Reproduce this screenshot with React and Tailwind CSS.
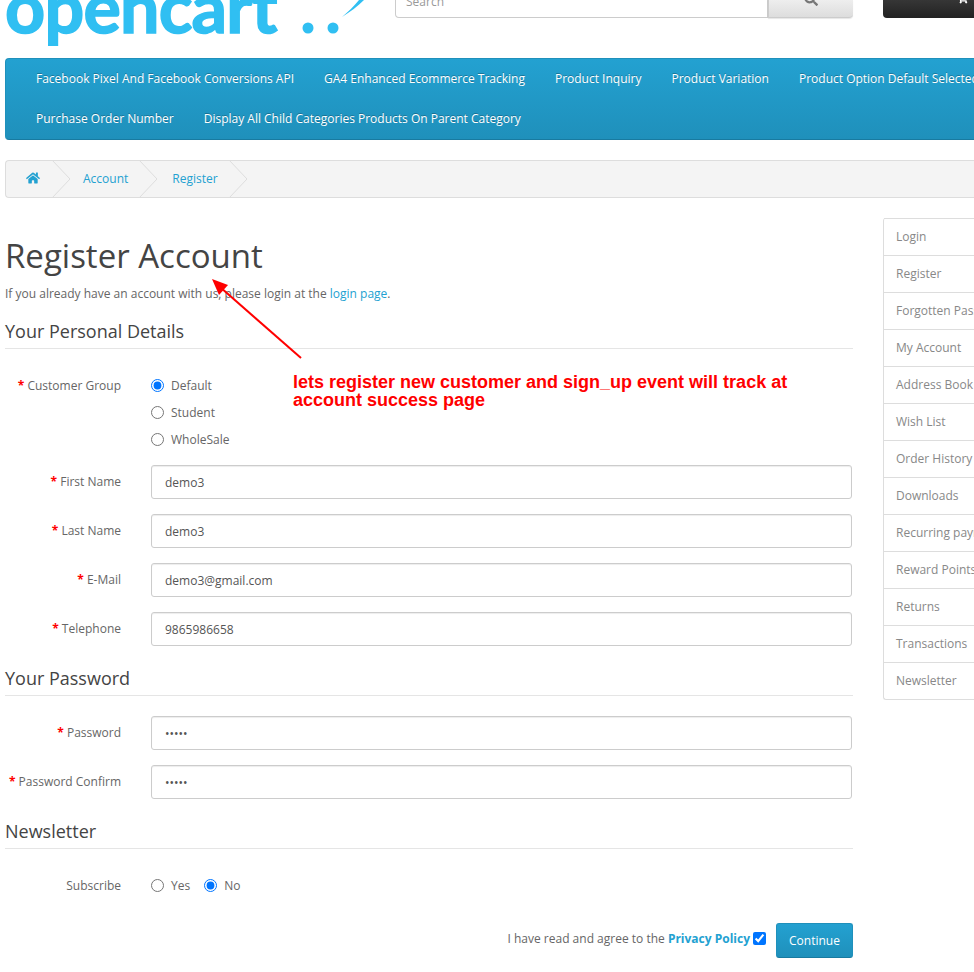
import { FaHome, FaSearch, FaShoppingCart } from 'react-icons/fa'

const menuTop = ['Facebook Pixel And Facebook Conversions API', 'GA4 Enhanced Ecommerce Tracking', 'Product Inquiry', 'Product Variation', 'Product Option Default Selected']
const menuBottom = ['Purchase Order Number', 'Display All Child Categories Products On Parent Category']
const sideLinks = ['Login', 'Register', 'Forgotten Password', 'My Account', 'Address Book', 'Wish List', 'Order History', 'Downloads', 'Recurring payments', 'Reward Points', 'Returns', 'Transactions', 'Newsletter']

function MenuRow({ items }) {
  return (
    <div className="flex h-10 items-center whitespace-nowrap pl-[15px]">
      {items.map((item) => (
        <a key={item} className="px-[15px] text-xs text-white [text-shadow:0_-1px_0_rgba(0,0,0,0.25)]">{item}</a>
      ))}
    </div>
  )
}

function Chevron() {
  return (
    <svg width="20" height="38" viewBox="0 0 20 38" className="shrink-0">
      <polyline points="0,0 18,19 0,38" fill="none" stroke="#dddddd" strokeWidth="1" />
    </svg>
  )
}

function Legend({ children, className }) {
  return <h2 className={`border-b border-[#e5e5e5] pb-1 text-lg leading-[25px] text-[#444] ${className}`}>{children}</h2>
}

function Field({ label, value, type = 'text', className = 'mt-[15px]' }) {
  return (
    <div className={`flex items-start ${className}`}>
      <label className="w-[116px] shrink-0 pt-[7px] text-right text-xs leading-[20px] text-[#666]">
        <span className="font-bold text-[#f00]">* </span>{label}
      </label>
      <input
        type={type}
        defaultValue={value}
        className="ml-[30px] h-[34px] w-[701px] rounded-[3px] border border-[#ccc] bg-white px-[13px] text-xs text-[#555] shadow-[inset_0_1px_1px_rgba(0,0,0,0.075)]"
      />
    </div>
  )
}

function Radio({ name, label, checked }) {
  return (
    <label className="flex h-[27px] items-center text-xs text-[#666]">
      <input type="radio" name={name} defaultChecked={checked} className="m-0 mr-[7px] size-[13px]" />
      {label}
    </label>
  )
}

export default function App() {
  return (
    <div className="relative h-[972px] w-[974px] overflow-hidden bg-white font-['Open_Sans',sans-serif] text-xs text-[#666]">
      {/* header, scrolled so its top is cut off */}
      <header className="relative flex h-[58px] items-end overflow-hidden pb-[40px]">
        <div className="absolute left-[5px] top-[-44px] font-['Lato',sans-serif] text-[70px] font-bold leading-[100px] tracking-[-0.8px] text-[#30bff2] [-webkit-text-stroke:1.5px_#30bff2]">opencart</div>
        <svg width="90" height="50" viewBox="0 0 90 50" className="absolute left-[290px] top-0">
          <circle cx="18" cy="28" r="5.5" fill="#30bff2" />
          <circle cx="43" cy="28" r="5.5" fill="#30bff2" />
          <path d="M52 17 C60 12 68 6 74 0 L69 0 C64 6 58 12 52 17 Z" fill="#30bff2" />
        </svg>
        <div className="ml-[395px] flex h-[18px] w-[458px] items-end">
          <div className="h-[18px] w-[373px] rounded-bl-[4px] border border-t-0 border-[#ccc] pl-[10px] text-xs leading-[3px] text-[#999]">Search</div>
          <div className="flex h-[18px] w-[85px] items-end justify-center rounded-br-[4px] border-b border-l border-[#ccc] bg-gradient-to-b from-[#eeeeee] to-[#dddddd] pb-[11px] shadow-[0_1px_1px_rgba(0,0,0,0.1)]">
            <FaSearch className="size-[14px] text-[#777]" />
          </div>
        </div>
        <div className="ml-[30px] flex h-[18px] w-[100px] shrink-0 items-end rounded-bl-[4px] bg-gradient-to-b from-[#363636] to-[#222222] pb-[14px] pl-[74px]">
          <FaShoppingCart className="size-[11px] shrink-0 text-white" />
        </div>
      </header>

      <nav className="ml-[5px] h-[82px] w-[1000px] rounded-l-[4px] border-y border-l border-[#1f90bb] border-b-[#187aa0] bg-gradient-to-b from-[#23a1d1] to-[#1f90bb]">
        <MenuRow items={menuTop} />
        <MenuRow items={menuBottom} />
      </nav>

      <ul className="ml-[5px] mt-5 flex h-[38px] w-[1000px] items-center rounded-l-[4px] border-y border-l border-[#ddd] bg-[#f4f4f4] text-xs text-[#23a1d1]">
        <li className="flex items-center pl-5"><FaHome className="mr-3 size-[14px] -translate-y-px" /><Chevron /></li>
        <li className="flex items-center pl-[11px]"><a className="mr-[11px]">Account</a><Chevron /></li>
        <li className="flex items-center pl-[13px]"><a className="mr-[11px]">Register</a><Chevron /></li>
      </ul>

      <div className="flex items-start pl-[5px] pt-5">
        <main className="w-[848px] shrink-0">
          <h1 className="mt-5 text-[33px] leading-[36px] text-[#444]">Register Account</h1>
          <p className="mt-[10px] leading-[20px]">If you already have an account with us, please login at the <a className="text-[#23a1d1]">login page</a>.</p>

          <Legend className="mt-[15px]">Your Personal Details</Legend>
          <div className="mt-[23px] flex items-start">
            <label className="w-[116px] shrink-0 pt-1 text-right leading-[20px]"><span className="font-bold text-[#f00]">* </span>Customer Group</label>
            <div className="ml-[30px]">
              <Radio name="group" label="Default" checked />
              <Radio name="group" label="Student" />
              <Radio name="group" label="WholeSale" />
            </div>
          </div>
          <Field label="First Name" value="demo3" className="mt-3" />
          <Field label="Last Name" value="demo3" />
          <Field label="E-Mail" value="demo3@gmail.com" />
          <Field label="Telephone" value="9865986658" />

          <Legend className="mt-5">Your Password</Legend>
          <Field label="Password" value="demo3" type="password" className="mt-5" />
          <Field label="Password Confirm" value="demo3" type="password" />

          <Legend className="mt-5">Newsletter</Legend>
          <div className="mt-[23px] flex h-[27px] items-center">
            <span className="w-[116px] shrink-0 text-right">Subscribe</span>
            <div className="ml-[30px] flex gap-[14px]">
              <Radio name="news" label="Yes" />
              <Radio name="news" label="No" checked />
            </div>
          </div>

          <div className="mt-6 flex items-start justify-end">
            <span className="mt-[6px] leading-[20px]">I have read and agree to the <a className="font-bold text-[#23a1d1]">Privacy Policy</a></span>
            <input type="checkbox" defaultChecked className="m-0 ml-[3px] mr-[10px] mt-[9px] size-[13px]" />
            <button className="h-[35px] w-[77px] rounded-[3px] border border-[#1f90bb] border-b-[#187aa0] bg-gradient-to-b from-[#23a1d1] to-[#1f90bb] text-xs text-white">Continue</button>
          </div>
        </main>

        <aside className="ml-[30px] w-[200px] shrink-0 rounded-l-[3px] border-b border-l border-[#ddd]">
          {sideLinks.map((link) => (
            <a key={link} className="block h-[37px] whitespace-nowrap border-t border-[#ddd] pl-3 text-xs leading-[36px] text-[#888]">{link}</a>
          ))}
        </aside>
      </div>

      {/* annotation drawn on top of the screenshot */}
      <svg width="120" height="100" viewBox="0 0 120 100" className="absolute left-[200px] top-[270px]">
        <line x1="101" y1="88" x2="20" y2="17" stroke="#f00" strokeWidth="2" />
        <polygon points="12,9 28,15 19,25" fill="#f00" />
      </svg>
      <p className="absolute left-[293px] top-[373px] w-[510px] font-['Liberation_Sans',sans-serif] text-lg font-bold leading-[18px] text-[#f00]">lets register new customer and sign_up event will track at account success page</p>
    </div>
  )
}
